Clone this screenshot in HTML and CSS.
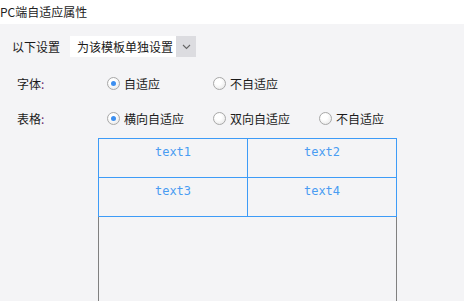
FILE: index.html
```html
<!DOCTYPE html>
<html lang="zh-CN">
<head>
    <meta charset="UTF-8">
    <title>PC端自适应属性</title>
    <link rel="stylesheet" href="styles.css">
</head>
<body>
    <div class="header">PC端自适应属性</div>

    <div class="panel">
        <!-- 设置范围 -->
        <div class="scope-row">
            <span class="scope-label">以下设置</span>
            <div class="select">
                <span class="select-text">为该模板单独设置</span>
                <span class="select-arrow">
                    <svg width="9" height="6" viewBox="0 0 9 6"><path d="M1 1 L4.5 4.5 L8 1" fill="none" stroke="#666" stroke-width="1.1"/></svg>
                </span>
            </div>
        </div>

        <!-- 字体 -->
        <div class="option-row">
            <span class="option-label">字体<span class="colon">:</span></span>
            <label class="radio"><span class="dot checked"></span>自适应</label>
            <label class="radio"><span class="dot"></span>不自适应</label>
        </div>

        <!-- 表格 -->
        <div class="option-row">
            <span class="option-label">表格<span class="colon">:</span></span>
            <label class="radio"><span class="dot checked"></span>横向自适应</label>
            <label class="radio"><span class="dot"></span>双向自适应</label>
            <label class="radio"><span class="dot"></span>不自适应</label>
        </div>

        <!-- 预览 -->
        <div class="preview">
            <div class="grid">
                <div class="cell">text1</div>
                <div class="cell">text2</div>
                <div class="cell">text3</div>
                <div class="cell">text4</div>
            </div>
            <div class="blank"></div>
        </div>
    </div>
</body>
</html>
```

FILE: styles.css
```css
body {
    margin: 0;
    background-color: #f4f4f6;
    font-family: "Noto Sans CJK SC", "Liberation Sans", sans-serif;
    font-size: 12px;
    color: #1a1a1a;
    overflow: hidden;
}
.header {
    height: 24px;
    line-height: 24px;
    background: white;
    color: #222;
}
.panel {
    padding-top: 12px;
}
.scope-row {
    display: flex;
    align-items: center;
    height: 21px;
    padding-left: 12px;
}
.scope-label {
    width: 58px;
}
.select {
    display: flex;
    height: 21px;
}
.select-text {
    width: 99px;
    padding-left: 7px;
    background: white;
    line-height: 21px;
}
.select-arrow {
    width: 20px;
    background: #dcdce0;
    display: flex;
    align-items: center;
    justify-content: center;
}
.option-row {
    display: flex;
    align-items: center;
    height: 20px;
    margin-top: 15px;
    padding-left: 17px;
}
.scope-row + .option-row {
    margin-top: 16px;
}
.option-label {
    width: 90px;
}
.colon {
    color: #6b2a6e;
}
.radio {
    display: flex;
    align-items: center;
    width: 106px;
}
.dot {
    box-sizing: border-box;
    width: 13px;
    height: 13px;
    margin-right: 4px;
    border: 1px solid #a8a8a8;
    border-radius: 50%;
    background: radial-gradient(circle at 40% 35%, #ffffff 30%, #e2e2e2 100%);
    position: relative;
}
.dot.checked::after {
    content: "";
    position: absolute;
    left: 3px;
    top: 3px;
    width: 5px;
    height: 5px;
    border-radius: 50%;
    background: #3d8ff0;
}
.preview {
    margin: 10px 0 0 98px;
    width: 299px;
}
.grid {
    display: grid;
    grid-template-columns: 149px 149px;
    border-top: 1px solid #3d9bf7;
    border-left: 1px solid #3d9bf7;
}
.cell {
    height: 33px;
    padding-top: 5px;
    line-height: 16px;
    text-align: center;
    border-right: 1px solid #3d9bf7;
    border-bottom: 1px solid #3d9bf7;
    font-family: "DejaVu Sans Mono", "Liberation Mono", monospace;
    color: #4a9cf2;
}
.blank {
    height: 84px;
    border-left: 1px solid #808080;
    border-right: 1px solid #808080;
}
```
